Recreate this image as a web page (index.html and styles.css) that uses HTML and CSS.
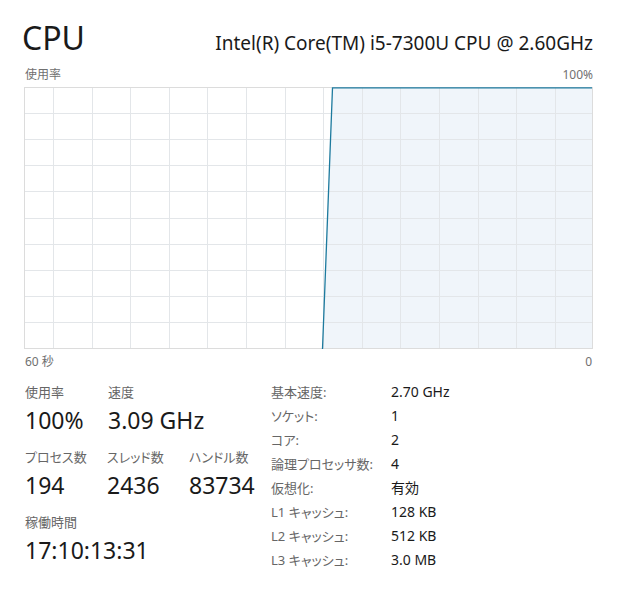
FILE: index.html
```html
<!DOCTYPE html>
<html lang="ja">

<head>
    <meta charset="UTF-8">
    <meta name="viewport" content="width=device-width, initial-scale=1.0">
    <title>CPU</title>
    <link rel="stylesheet" href="styles.css">
</head>

<body>
    <div class="page">
        <div class="head">
            <h1>CPU</h1>
            <div class="model">Intel(R) Core(TM) i5-7300U CPU @ 2.60GHz</div>
        </div>

        <div class="axis">
            <span>使用率</span>
            <span>100%</span>
        </div>

        <!-- 使用率グラフ (60 秒) -->
        <svg class="graph" width="569" height="262" viewBox="0 0 569 262">
            <polygon class="fill" points="298.5,262 308.5,0 569,0 569,262" />
            <g class="grid">
                <line x1="29.5" y1="0" x2="29.5" y2="262" />
                <line x1="68.5" y1="0" x2="68.5" y2="262" />
                <line x1="106.5" y1="0" x2="106.5" y2="262" />
                <line x1="145.5" y1="0" x2="145.5" y2="262" />
                <line x1="183.5" y1="0" x2="183.5" y2="262" />
                <line x1="222.5" y1="0" x2="222.5" y2="262" />
                <line x1="261.5" y1="0" x2="261.5" y2="262" />
                <line x1="299.5" y1="0" x2="299.5" y2="262" />
                <line x1="338.5" y1="0" x2="338.5" y2="262" />
                <line x1="376.5" y1="0" x2="376.5" y2="262" />
                <line x1="415.5" y1="0" x2="415.5" y2="262" />
                <line x1="454.5" y1="0" x2="454.5" y2="262" />
                <line x1="492.5" y1="0" x2="492.5" y2="262" />
                <line x1="531.5" y1="0" x2="531.5" y2="262" />
                <line x1="0" y1="26.5" x2="569" y2="26.5" />
                <line x1="0" y1="52.5" x2="569" y2="52.5" />
                <line x1="0" y1="78.5" x2="569" y2="78.5" />
                <line x1="0" y1="104.5" x2="569" y2="104.5" />
                <line x1="0" y1="131.5" x2="569" y2="131.5" />
                <line x1="0" y1="157.5" x2="569" y2="157.5" />
                <line x1="0" y1="183.5" x2="569" y2="183.5" />
                <line x1="0" y1="209.5" x2="569" y2="209.5" />
                <line x1="0" y1="235.5" x2="569" y2="235.5" />
            </g>
            <rect class="frame" x="0.5" y="0.5" width="568" height="261" />
            <polyline class="line" points="298.5,262 308.5,0.8 568,0.8" />
        </svg>

        <div class="axis bottom">
            <span>60 秒</span>
            <span>0</span>
        </div>

        <div class="details">
            <div class="stats">
                <div class="stat-row">
                    <div class="stat">
                        <div class="label">使用率</div>
                        <div class="value">100%</div>
                    </div>
                    <div class="stat">
                        <div class="label">速度</div>
                        <div class="value">3.09 GHz</div>
                    </div>
                </div>
                <div class="stat-row">
                    <div class="stat">
                        <div class="label">プロセス数</div>
                        <div class="value">194</div>
                    </div>
                    <div class="stat">
                        <div class="label">スレッド数</div>
                        <div class="value">2436</div>
                    </div>
                    <div class="stat">
                        <div class="label">ハンドル数</div>
                        <div class="value">83734</div>
                    </div>
                </div>
                <div class="stat-row">
                    <div class="stat">
                        <div class="label">稼働時間</div>
                        <div class="value">17:10:13:31</div>
                    </div>
                </div>
            </div>

            <dl class="specs">
                <dt>基本速度:</dt>
                <dd>2.70 GHz</dd>
                <dt>ソケット:</dt>
                <dd>1</dd>
                <dt>コア:</dt>
                <dd>2</dd>
                <dt>論理プロセッサ数:</dt>
                <dd>4</dd>
                <dt>仮想化:</dt>
                <dd>有効</dd>
                <dt>L1 キャッシュ:</dt>
                <dd>128 KB</dd>
                <dt>L2 キャッシュ:</dt>
                <dd>512 KB</dd>
                <dt>L3 キャッシュ:</dt>
                <dd>3.0 MB</dd>
            </dl>
        </div>
    </div>
</body>

</html>
```

FILE: styles.css
```css
body {
    margin: 0;
    background-color: #ffffff;
    color: #1a1a1a;
    font-family: 'Noto Sans', 'Noto Sans CJK JP', sans-serif;
}

.page {
    padding: 18px 25px 0 24px;
}

.head {
    display: flex;
    justify-content: space-between;
    align-items: baseline;
    height: 46px;
}

h1 {
    margin: 0;
    font-size: 32px;
    font-weight: 400;
    line-height: 40px;
    margin-left: -2px;
}

.model {
    font-size: 19px;
    line-height: 24px;
    white-space: nowrap;
}

.axis {
    display: flex;
    justify-content: space-between;
    height: 16px;
    font-size: 12px;
    line-height: 16px;
    color: #707070;
    margin-top: 3px;
    margin-left: 1px;
    font-feature-settings: "palt";
}

.axis.bottom {
    margin-top: 5px;
    margin-right: 1px;
}

.graph {
    display: block;
    margin-top: 4px;
}

.grid line {
    stroke: #e3e6e9;
    stroke-width: 1;
}

.fill {
    fill: #f0f5fa;
}

.line {
    fill: none;
    stroke: #1d7a9e;
    stroke-width: 1.3;
}

.frame {
    fill: none;
    stroke: #dcdcdc;
    stroke-width: 1;
}

.details {
    display: flex;
    margin-top: 10px;
    margin-left: 1px;
}

.stats {
    width: 246px;
    padding-top: 2px;
}

.stat-row {
    display: flex;
    margin-bottom: 9px;
}

.stat {
    width: 83px;
}

.label {
    height: 20px;
    font-size: 13px;
    line-height: 20px;
    color: #666666;
    font-feature-settings: "palt";
}

.value {
    height: 36px;
    font-size: 23px;
    line-height: 36px;
    white-space: nowrap;
}

.specs {
    display: grid;
    grid-template-columns: 120px auto;
    grid-auto-rows: 24px;
    margin: 0;
    font-size: 13px;
    line-height: 24px;
}

dt {
    color: #666666;
    font-feature-settings: "palt";
}

dd {
    margin: 0;
    font-size: 14px;
    color: #1a1a1a;
}
```
